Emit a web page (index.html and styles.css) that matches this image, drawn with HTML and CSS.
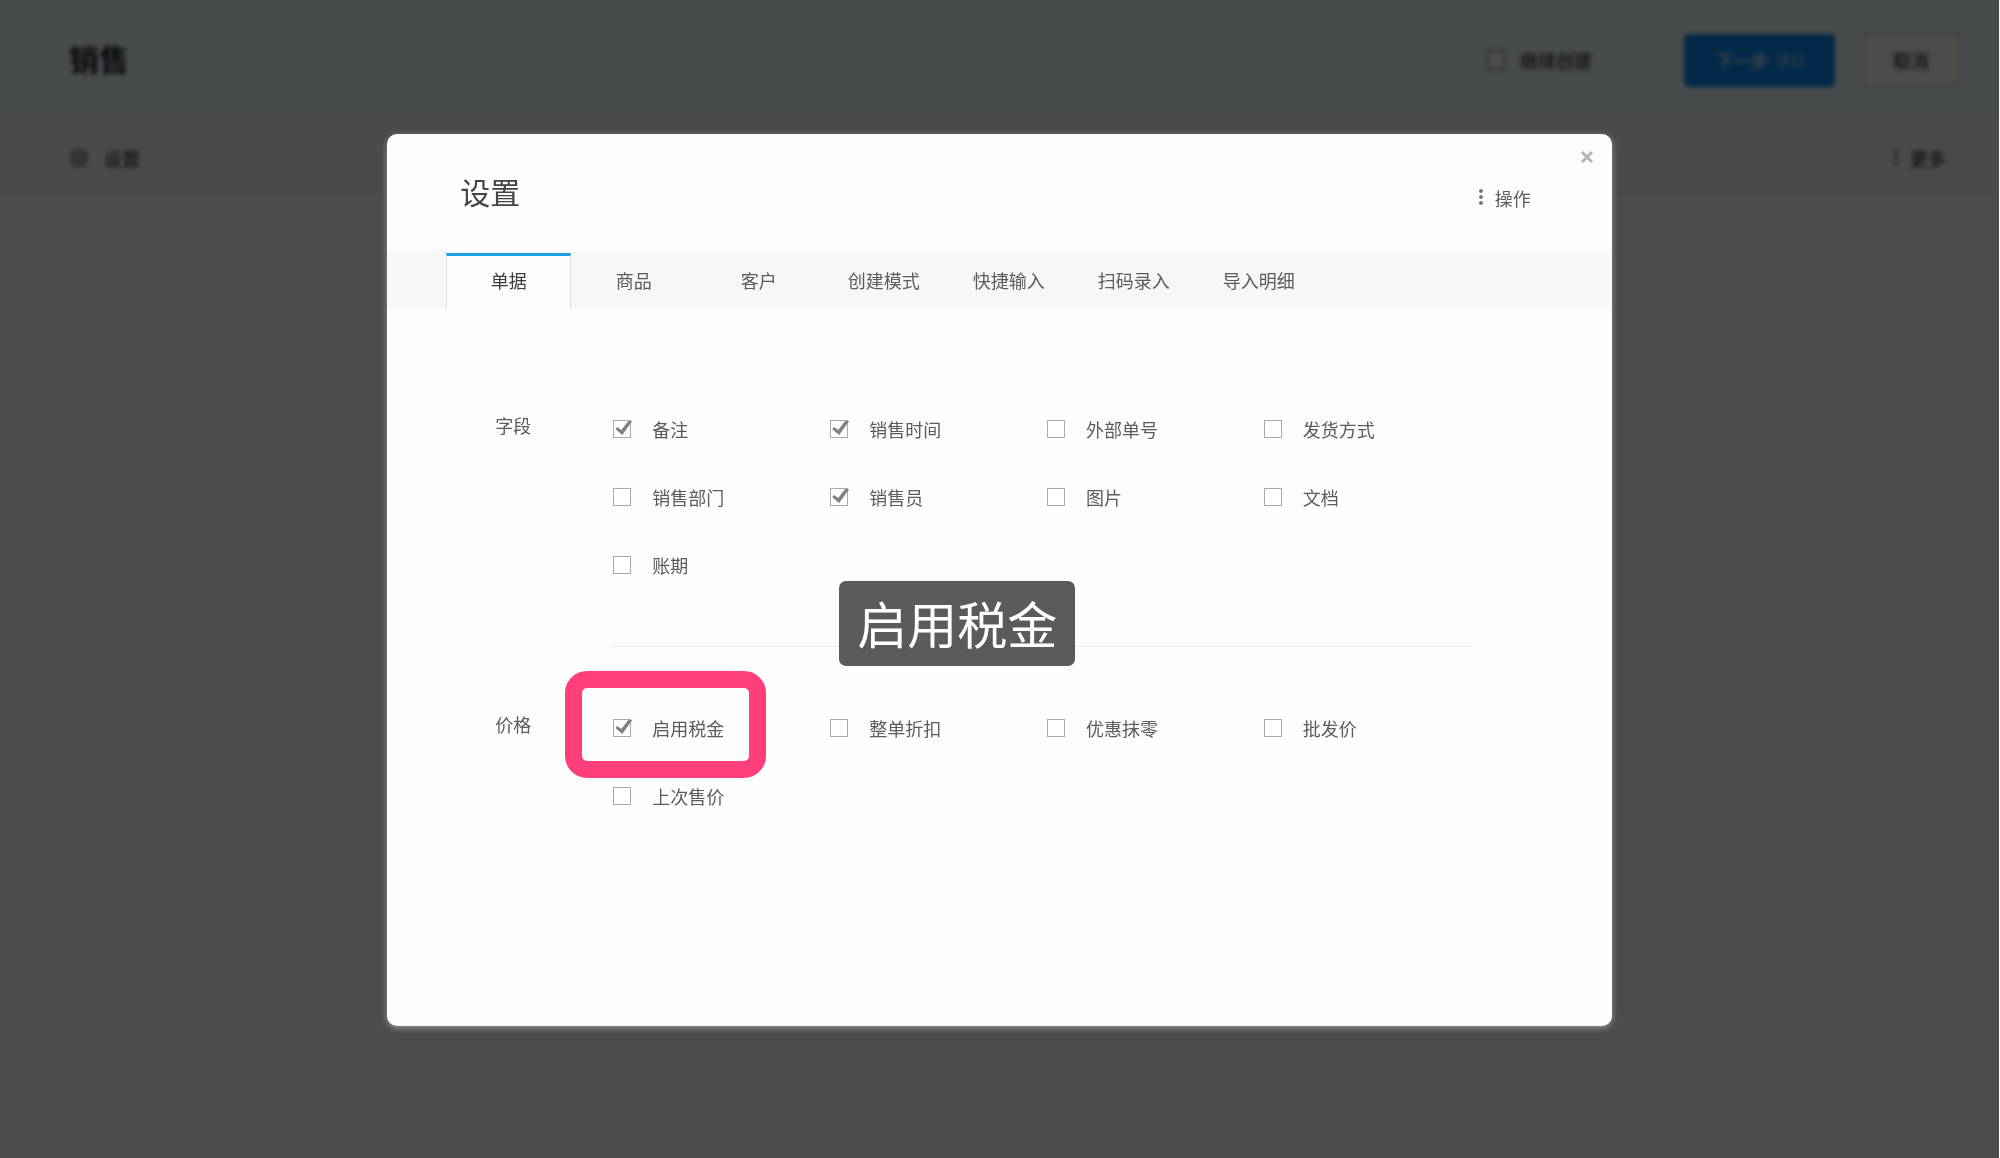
FILE: index.html
```html
<!DOCTYPE html>
<html lang="zh-CN">
<head>
<meta charset="utf-8">
<meta name="viewport" content="width=device-width, initial-scale=1">
<title>销售</title>
<link rel="stylesheet" href="styles.css">
</head>
<body>
<div class="page">
  <header class="topbar">
    <h1 class="page-title">销售</h1>
    <div class="actions">
      <label class="keep"><input type="checkbox" class="check keep-check"><span>继续创建</span></label>
      <button type="button" class="btn btn-primary"><span>下一步</span><span class="key">(F1)</span></button>
      <button type="button" class="btn btn-plain">取消</button>
    </div>
  </header>
  <div class="toolbar">
    <button type="button" class="tool tool-settings">
      <svg class="gear" viewBox="0 0 20 20" aria-hidden="true"><circle cx="10" cy="10" r="8" fill="#bbb" stroke="#999" stroke-width="2"/><circle cx="10" cy="10" r="9" fill="none" stroke="#999" stroke-width="2" stroke-dasharray="4 3"/><circle cx="10" cy="10" r="3" fill="none" stroke="#999" stroke-width="1"/></svg>
      <span>设置</span>
    </button>
    <button type="button" class="tool tool-more">
      <svg class="dots" viewBox="0 0 4 16" aria-hidden="true"><circle cx="2" cy="2" r="2"/><circle cx="2" cy="8" r="2"/><circle cx="2" cy="14" r="2"/></svg>
      <span>更多</span>
    </button>
  </div>
</div>

<div class="overlay">
  <section class="modal" role="dialog" aria-modal="true" aria-labelledby="modal-title">
    <header class="modal-head">
      <h2 class="modal-title" id="modal-title">设置</h2>
      <button type="button" class="tool tool-ops">
        <svg class="dots" viewBox="0 0 4 16" aria-hidden="true"><circle cx="2" cy="2" r="2"/><circle cx="2" cy="8" r="2"/><circle cx="2" cy="14" r="2"/></svg>
        <span>操作</span>
      </button>
      <button type="button" class="close" aria-label="关闭">
        <svg class="close-icon" viewBox="0 0 14 14" aria-hidden="true"><path d="M2 2L12 12M12 2L2 12"/></svg>
      </button>
    </header>
    <nav class="tabs" role="tablist">
      <button type="button" class="tab tab-active" role="tab" aria-selected="true">单据</button>
      <button type="button" class="tab" role="tab">商品</button>
      <button type="button" class="tab" role="tab">客户</button>
      <button type="button" class="tab" role="tab">创建模式</button>
      <button type="button" class="tab" role="tab">快捷输入</button>
      <button type="button" class="tab" role="tab">扫码录入</button>
      <button type="button" class="tab" role="tab">导入明细</button>
    </nav>
    <form class="settings">
      <div class="group" role="group" aria-labelledby="g-fields">
        <h3 class="group-name" id="g-fields">字段</h3>
        <div class="options options-ruled">
          <label class="option"><input type="checkbox" class="check" checked><span>备注</span></label>
          <label class="option"><input type="checkbox" class="check" checked><span>销售时间</span></label>
          <label class="option"><input type="checkbox" class="check"><span>外部单号</span></label>
          <label class="option"><input type="checkbox" class="check"><span>发货方式</span></label>
          <label class="option"><input type="checkbox" class="check"><span>销售部门</span></label>
          <label class="option"><input type="checkbox" class="check" checked><span>销售员</span></label>
          <label class="option"><input type="checkbox" class="check"><span>图片</span></label>
          <label class="option"><input type="checkbox" class="check"><span>文档</span></label>
          <label class="option"><input type="checkbox" class="check"><span>账期</span></label>
        </div>
      </div>
      <div class="group" role="group" aria-labelledby="g-price">
        <h3 class="group-name" id="g-price">价格</h3>
        <div class="options">
          <div class="spot">
            <label class="option"><input type="checkbox" class="check" checked><span>启用税金</span></label>
            <div class="spot-ring"></div>
            <div class="spot-tip" role="tooltip">启用税金</div>
          </div>
          <label class="option"><input type="checkbox" class="check"><span>整单折扣</span></label>
          <label class="option"><input type="checkbox" class="check"><span>优惠抹零</span></label>
          <label class="option"><input type="checkbox" class="check"><span>批发价</span></label>
          <label class="option"><input type="checkbox" class="check"><span>上次售价</span></label>
        </div>
      </div>
    </form>
  </section>
</div>
</body>
</html>
```

FILE: styles.css
```css
* { box-sizing: border-box; }

body {
  margin: 0;
  background: #fff;
  color: #444;
  font: 18px/28px "Noto Sans CJK SC", sans-serif;
}

button {
  margin: 0;
  padding: 0;
  border: 0;
  background: none;
  color: inherit;
  font: inherit;
  cursor: pointer;
}

h1, h2, h3 { margin: 0; }

/* Page behind the dialog */
.page { min-height: 100vh; }

.topbar {
  display: flex;
  align-items: center;
  justify-content: space-between;
  height: 118px;
  padding: 2px 40px 0 69px;
  background: #edfaff;
}

.page-title {
  padding-bottom: 4px;
  color: #222;
  font-size: 30px;
  font-weight: 700;
  line-height: 40px;
}

.actions {
  display: flex;
  align-items: center;
}

.keep {
  display: flex;
  align-items: center;
  gap: 14px;
  margin-right: 92px;
  font-weight: 500;
}

.btn {
  height: 53px;
  border-radius: 5px;
  font-weight: 500;
}

.btn-primary {
  display: flex;
  align-items: center;
  justify-content: center;
  gap: 8px;
  width: 151px;
  margin-right: 27px;
  background: #0d8bf5;
  color: #e4ecf4;
}

.key {
  font-size: 15px;
  font-weight: 400;
}

.btn-plain {
  width: 98px;
  border: 2px solid #d5d0cc;
  background: #fff;
}

.toolbar {
  display: flex;
  align-items: center;
  justify-content: space-between;
  height: 78px;
  padding: 2px 54px 0 69px;
  background: #f9f9f9;
}

.tool {
  display: flex;
  align-items: center;
  gap: 12px;
}

.tool-settings { gap: 15px; font-weight: 500; }
.tool-more { font-weight: 500; }

.gear { width: 20px; height: 20px; }

.dots {
  width: 4px;
  height: 16px;
  margin-bottom: 2px;
  fill: #777;
}

/* Tick boxes */
.check {
  appearance: none;
  flex: none;
  width: 18px;
  height: 18px;
  margin: 0;
  border: 1px solid #aaa;
  background: #fff;
}

.check:checked::before {
  content: "";
  display: block;
  width: 18px;
  height: 14px;
  background: #808080;
  clip-path: polygon(1px 8px, 3px 6px, 7px 9px, 14px 0, 18px 0, 8px 14px);
}

.keep-check {
  width: 20px;
  height: 20px;
  border-width: 2px;
}

/* Dialog; the page's edge stays visible at the right of the overlay */
.overlay {
  position: fixed;
  inset: 0 1px 0 0;
  display: flex;
  justify-content: center;
  padding: 134px 0 132px;
  overflow: auto;
  background: rgba(0, 0, 0, 0.7);
  backdrop-filter: blur(2px);
}

.modal {
  display: flex;
  flex-direction: column;
  width: 61.25%;
  min-width: 1100px;
  border-radius: 10px;
  background: #fdfdfd;
  box-shadow: 0 2px 6px rgba(255, 255, 255, 0.4);
  color: #5c5c5c;
}

.modal-head {
  position: relative;
  display: flex;
  justify-content: space-between;
  height: 117px;
  padding: 37px 81px 0 73px;
}

.modal-title {
  color: #444;
  font-size: 30px;
  font-weight: 400;
  line-height: 40px;
}

.tool-ops {
  height: 28px;
  margin-top: 13px;
}

.close {
  position: absolute;
  top: 13px;
  right: 15px;
  display: flex;
  align-items: center;
  justify-content: center;
  width: 20px;
  height: 20px;
}

.close-icon {
  width: 14px;
  height: 14px;
  fill: none;
  stroke: #b4b4b4;
  stroke-width: 3;
}

.tabs {
  display: flex;
  height: 58px;
  padding: 2px 0 0 59px;
  background: #f7f7f7;
}

.tab {
  width: 125px;
  padding-bottom: 2px;
}

.tab-active {
  padding-bottom: 5px;
  border: solid #ddd;
  border-width: 3px 1px 0;
  border-top-color: #1a9fe0;
  background: #fdfdfd;
  color: #3c3c3c;
}

.settings { padding: 106px 139px 0 108px; }

.group {
  display: grid;
  grid-template-columns: 118px 1fr;
  margin-bottom: 67px;
}

.group-name {
  font-size: 18px;
  font-weight: 400;
  line-height: 20px;
}

.options {
  display: grid;
  grid-template-columns: repeat(4, 1fr);
  gap: 40px 8px;
}

.options-ruled {
  padding-bottom: 67px;
  border-bottom: 1px solid #ebebeb;
}

.option {
  display: flex;
  align-items: center;
  gap: 21px;
}

/* Guide highlight laid over the tax option */
.spot { position: relative; }

.spot-ring {
  position: absolute;
  top: -43px;
  left: -48px;
  width: 201px;
  height: 107px;
  border: 17px solid #ff3f7a;
  border-radius: 22px;
  pointer-events: none;
}

.spot-tip {
  position: absolute;
  top: -133px;
  left: 226px;
  z-index: 1;
  padding: 5px 18px 7px;
  border-radius: 7px;
  background: rgba(0, 0, 0, 0.64);
  color: #fff;
  font-size: 50px;
  line-height: 73px;
  white-space: nowrap;
}
```
